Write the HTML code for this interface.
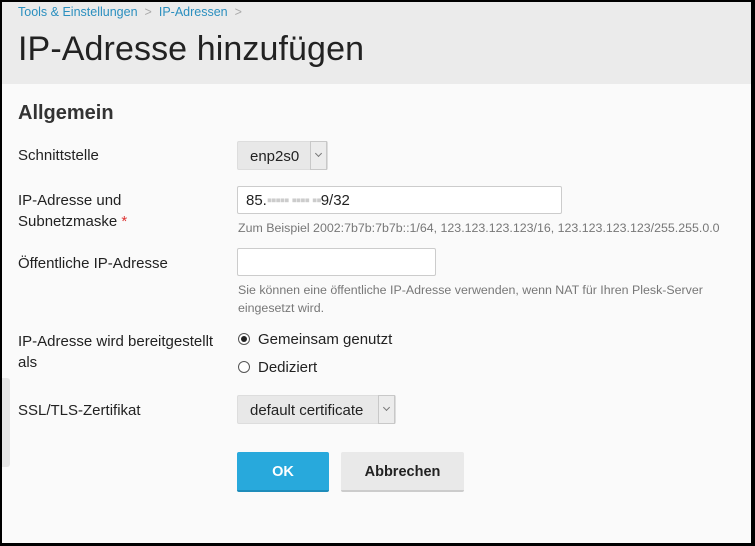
<!DOCTYPE html>
<html><head><meta charset="utf-8"><style>
*{box-sizing:border-box;margin:0;padding:0}
html,body{width:755px;height:546px;overflow:hidden;background:#000}
body{font-family:"Liberation Sans",sans-serif;color:#222;position:relative}
.frame{position:absolute;left:2px;top:2px;width:749px;height:541px;background:#fafafa;overflow:hidden}
.hdr{position:absolute;left:0;top:0;width:749px;height:82px;background:#ebebeb}
.bc{position:absolute;left:16px;top:3px;font-size:12.5px;color:#2a8fbf}
.bc span{color:#aaa;margin:0 7px}
h1{position:absolute;left:16px;top:28px;font-size:34px;font-weight:normal;color:#222;letter-spacing:0.1px}
h2{position:absolute;left:16px;top:100px;font-size:20px;font-weight:bold;color:#333}
.lbl{position:absolute;left:16px;font-size:15px;color:#222;line-height:21px}
.sel{position:absolute;height:29px;background:#e8e8e8;border:1px solid #ddd;border-radius:2px;font-size:15px;line-height:29px;padding-left:12px;color:#222}
.sel .ar{position:absolute;right:0;top:-1px;width:17px;height:29px;border:1px solid #c8c8c8;background:#ececec;}
.sel .ar:after{content:"";position:absolute;left:5px;top:9px;width:4px;height:4px;border-right:1px solid #777;border-bottom:1px solid #777;transform:rotate(45deg)}
.inp{position:absolute;height:28px;background:#fff;border:1px solid #ccc;border-radius:2px;font-size:15px;line-height:28px;padding-left:8px}
.hint{position:absolute;left:236px;font-size:12.4px;color:#777;line-height:18px}
.radio{position:absolute;left:236px;font-size:15px}
.radio i{display:inline-block;width:12px;height:12px;border:1px solid #555;border-radius:50%;vertical-align:-1px;margin-right:8px;position:relative;background:#fff}
.radio i.on:after{content:"";position:absolute;left:2px;top:2px;width:6px;height:6px;border-radius:50%;background:#222}
.btn{position:absolute;top:450px;height:40px;font-size:14.5px;font-weight:bold;text-align:center;line-height:40px;border-radius:2px}
</style></head><body>
<div class="frame">
<div class="hdr"></div>
<div class="bc">Tools &amp; Einstellungen<span>&gt;</span>IP-Adressen<span>&gt;</span></div>
<h1>IP-Adresse hinzufügen</h1>
<h2>Allgemein</h2>
<div class="lbl" style="top:143px">Schnittstelle</div>
<div class="sel" style="left:235px;top:139px;width:91px">enp2s0<div class="ar"></div></div>
<div class="lbl" style="top:188px">IP-Adresse und<br>Subnetzmaske <span style="color:#d33">*</span></div>
<div class="inp" style="left:235px;top:184px;width:325px">85.<span style="color:#ccc;letter-spacing:-1px">▪▪▪▪▪ ▪▪▪▪ ▪▪</span>9/32</div>
<div class="hint" style="top:217px">Zum Beispiel 2002:7b7b:7b7b::1/64, 123.123.123.123/16, 123.123.123.123/255.255.0.0</div>
<div class="lbl" style="top:251px">Öffentliche IP-Adresse</div>
<div class="inp" style="left:235px;top:246px;width:199px"></div>
<div class="hint" style="top:279px">Sie können eine öffentliche IP-Adresse verwenden, wenn NAT für Ihren Plesk-Server<br>eingesetzt wird.</div>
<div class="lbl" style="top:329px">IP-Adresse wird bereitgestellt<br>als</div>
<div class="radio" style="top:329px"><i class="on"></i>Gemeinsam genutzt</div>
<div class="radio" style="top:357px"><i></i>Dediziert</div>
<div class="lbl" style="top:398px">SSL/TLS-Zertifikat</div>
<div class="sel" style="left:235px;top:393px;width:159px">default certificate<div class="ar"></div></div>
<div class="btn" style="left:235px;width:92px;background:#28a9dc;color:#fff;border-bottom:2px solid #1e8cba">OK</div>
<div class="btn" style="left:339px;width:123px;background:#e9e9e9;color:#222;border-bottom:2px solid #ccc">Abbrechen</div>
<div style="position:absolute;left:0;top:376px;width:8px;height:89px;background:#e6e6e6;border-radius:0 3px 3px 0"></div>
</div>
</body></html>
